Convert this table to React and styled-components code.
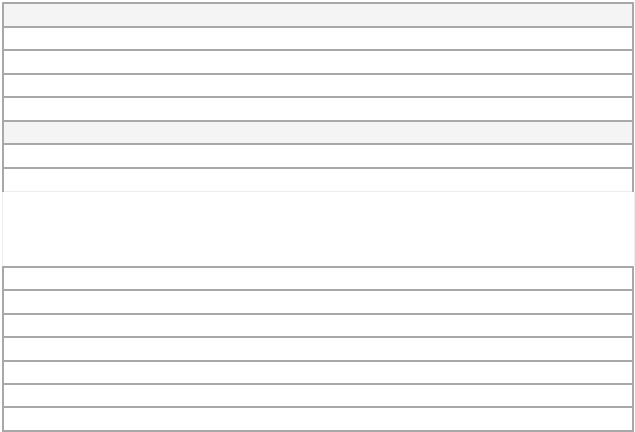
import React from 'react';
import styled, { createGlobalStyle } from 'styled-components';

const GlobalStyle = createGlobalStyle`
  body {
    margin: 0;
    background: #fff;
    font-family: 'Liberation Sans', Arial, sans-serif;
  }
`;

const topRows = [true, false, false, false, false, true, false, false];
const bottomRows = [false, false, false, false, false, false, false];

const App = () => {
  return (
    <>
      <GlobalStyle />
      <Page>
        <Grid>
          {topRows.map((shaded, i) => (
            <Row key={i} $shaded={shaded} $soft={i === topRows.length - 1} />
          ))}
        </Grid>
        <Gap />
        <Grid>
          {bottomRows.map((shaded, i) => (
            <Row key={i} $shaded={shaded} $tight />
          ))}
        </Grid>
      </Page>
    </>
  );
};

export default App;

const Page = styled.div`
  width: 635px;
  height: 432px;
  padding: 2px 0 0 2px;
  box-sizing: border-box;
  display: flex;
  flex-direction: column;
  overflow: hidden;
`;

const Grid = styled.div`
  display: flex;
  flex-direction: column;
  width: 632px;
  border-top: 2px solid #a8a8a8;
  border-left: 2px solid #a8a8a8;
  border-right: 2px solid #a8a8a8;
  box-sizing: border-box;
  flex-shrink: 0;
`;

const Row = styled.div`
  height: ${(p) => (p.$soft ? '22.5px' : p.$tight ? '21.4px' : '21.5px')};
  border-bottom: ${(p) => (p.$soft ? '1px solid #ececec' : '2px solid #a8a8a8')};
  background: ${(p) => (p.$shaded ? '#f4f4f4' : '#fff')};
`;

const Gap = styled.div`
  height: 74px;
  width: 633px;
  border-left: 1px solid #eee;
  border-right: 1px solid #eee;
  box-sizing: border-box;
  flex-shrink: 0;
`;
